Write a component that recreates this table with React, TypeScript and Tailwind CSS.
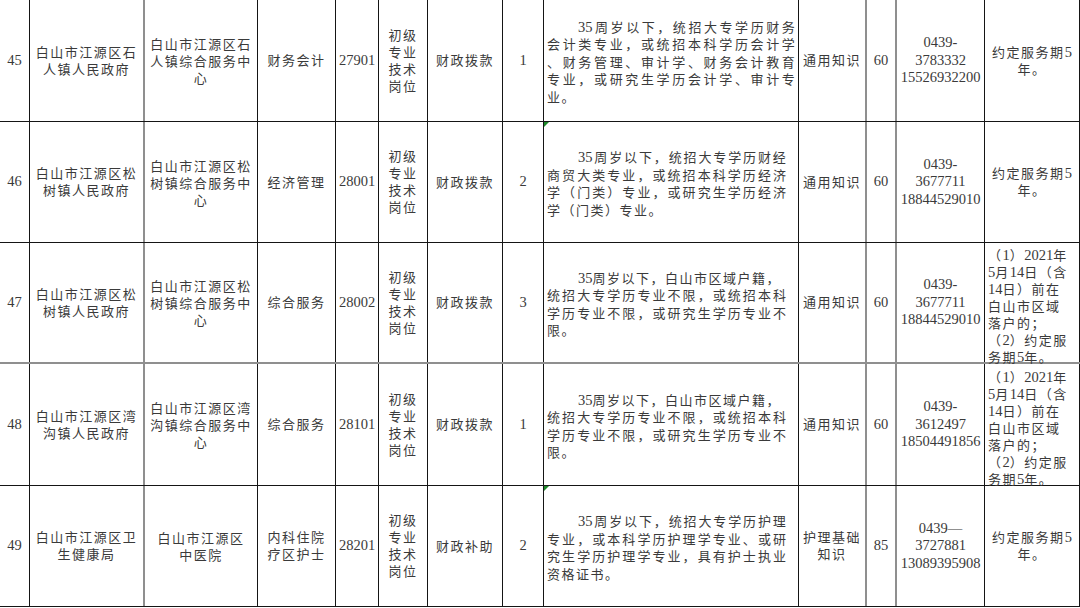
import React from "react";

type Row = {
  n: string;
  dept: string[];
  unit: string[];
  post: string[];
  code: string;
  fund: string;
  num: string;
  cond: string[];
  firstJustify: boolean;
  condPr: string;
  exam: string[];
  ratio: string;
  phone: string[];
  note: string[];
  noteLeft: boolean;
  mark: boolean;
  h: string;
  bb: string;
};

const noteLong = ["（1）2021年", "5月14日（含", "14日）前在", "白山市区域", "落户的；", "（2）约定服", "务期5年。"];
const condRural = ["35周岁以下，白山市区域户籍，", "统招大专学历专业不限，或统招本科", "学历专业不限，或研究生学历专业不", "限。"];

const rows: Row[] = [
  {
    n: "45",
    dept: ["白山市江源区石", "人镇人民政府"],
    unit: ["白山市江源区石", "人镇综合服务中", "心"],
    post: ["财务会计"],
    code: "27901",
    fund: "财政拨款",
    num: "1",
    cond: ["35周岁以下，统招大专学历财务", "会计类专业，或统招本科学历会计学", "、财务管理、审计学、财务会计教育", "专业，或研究生学历会计学、审计专", "业。"],
    firstJustify: true,
    condPr: "pr-[3px]",
    exam: ["通用知识"],
    ratio: "60",
    phone: ["0439-", "3783332", "15526932200"],
    note: ["约定服务期5", "年。"],
    noteLeft: false,
    mark: false,
    h: "h-[122px]",
    bb: "border-b border-b-[#151515]",
  },
  {
    n: "46",
    dept: ["白山市江源区松", "树镇人民政府"],
    unit: ["白山市江源区松", "树镇综合服务中", "心"],
    post: ["经济管理"],
    code: "28001",
    fund: "财政拨款",
    num: "2",
    cond: ["35周岁以下，统招大专学历财经", "商贸大类专业，或统招本科学历经济", "学（门类）专业，或研究生学历经济", "学（门类）专业。"],
    firstJustify: true,
    condPr: "pr-[12px]",
    exam: ["通用知识"],
    ratio: "60",
    phone: ["0439-", "3677711", "18844529010"],
    note: ["约定服务期5", "年。"],
    noteLeft: false,
    mark: true,
    h: "h-[121px]",
    bb: "border-b border-b-[#151515]",
  },
  {
    n: "47",
    dept: ["白山市江源区松", "树镇人民政府"],
    unit: ["白山市江源区松", "树镇综合服务中", "心"],
    post: ["综合服务"],
    code: "28002",
    fund: "财政拨款",
    num: "3",
    cond: condRural,
    firstJustify: false,
    condPr: "pr-[12px]",
    exam: ["通用知识"],
    ratio: "60",
    phone: ["0439-", "3677711", "18844529010"],
    note: noteLong,
    noteLeft: true,
    mark: false,
    h: "h-[121px]",
    bb: "border-b-2 border-b-[#8f8f8f]",
  },
  {
    n: "48",
    dept: ["白山市江源区湾", "沟镇人民政府"],
    unit: ["白山市江源区湾", "沟镇综合服务中", "心"],
    post: ["综合服务"],
    code: "28101",
    fund: "财政拨款",
    num: "1",
    cond: condRural,
    firstJustify: false,
    condPr: "pr-[12px]",
    exam: ["通用知识"],
    ratio: "60",
    phone: ["0439-", "3612497", "18504491856"],
    note: noteLong,
    noteLeft: true,
    mark: false,
    h: "h-[122px]",
    bb: "border-b border-b-[#151515]",
  },
  {
    n: "49",
    dept: ["白山市江源区卫", "生健康局"],
    unit: ["白山市江源区", "中医院"],
    post: ["内科住院", "疗区护士"],
    code: "28201",
    fund: "财政补助",
    num: "2",
    cond: ["35周岁以下，统招大专学历护理", "专业，或本科学历护理学专业、或研", "究生学历护理学专业，具有护士执业", "资格证书。"],
    firstJustify: true,
    condPr: "pr-[12px]",
    exam: ["护理基础", "知识"],
    ratio: "85",
    phone: ["0439—", "3727881", "13089395908"],
    note: ["约定服务期5", "年。"],
    noteLeft: false,
    mark: true,
    h: "h-[121px]",
    bb: "border-b border-b-[#151515]",
  },
];

// Render text with digit runs in a larger serif size
function T({ s }: { s: string }) {
  const parts = s.match(/\d+|[^\d]+/g) || [];
  return (
    <>
      {parts.map((p, i) =>
        /^\d+$/.test(p) ? (
          <span key={i} className="text-[14.5px] tracking-normal">
            {p}
          </span>
        ) : (
          <span key={i}>{p}</span>
        )
      )}
    </>
  );
}

function Lines({ lines, left }: { lines: string[]; left?: boolean }) {
  return (
    <div className={left ? "text-left" : "text-center"}>
      {lines.map((l, i) => (
        <div key={i} className="whitespace-nowrap leading-[17px]">
          <T s={l} />
        </div>
      ))}
    </div>
  );
}

function Justified({ s, indent }: { s: string; indent?: boolean }) {
  const tokens = s.match(/\d+|./gu) || [];
  return (
    <div className={`flex justify-between leading-[17.5px] tracking-normal ${indent ? "pl-[31px]" : ""}`}>
      {tokens.map((t, i) =>
        /^\d+$/.test(t) ? (
          <span key={i} className="text-[14.5px]">
            {t}
          </span>
        ) : (
          <span key={i}>{t}</span>
        )
      )}
    </div>
  );
}

const black = "border-r border-r-[#151515]";
const gray = "border-r-2 border-r-[#8f8f8f]";
const cellBase = "flex items-center justify-center shrink-0 h-full";

export default function App() {
  return (
    <div className="w-[1080px] h-[608px] overflow-hidden bg-white text-[#3a3a3a] text-[13px] tracking-[1.5px] font-['Liberation_Serif','Noto_Sans_CJK_SC',serif]">
      {rows.map((r) => (
        <div key={r.n} className={`flex w-[1080px] ${r.h} ${r.bb}`}>
          <div className={`${cellBase} w-[30px] ${black}`}>
            <span className="text-[14.5px] tracking-normal">{r.n}</span>
          </div>
          <div className={`${cellBase} w-[115px] ${gray}`}>
            <Lines lines={r.dept} />
          </div>
          <div className={`${cellBase} w-[113px] ${black} pt-[2px]`}>
            <Lines lines={r.unit} />
          </div>
          <div className={`${cellBase} w-[78px] ${black}`}>
            <Lines lines={r.post} />
          </div>
          <div className={`${cellBase} w-[43px] ${black}`}>
            <span className="text-[14.5px] tracking-normal">{r.code}</span>
          </div>
          <div className={`${cellBase} w-[49px] ${black}`}>
            <Lines lines={["初级", "专业", "技术", "岗位"]} />
          </div>
          <div className={`${cellBase} w-[75px] ${black}`}>
            <Lines lines={[r.fund]} />
          </div>
          <div className={`${cellBase} w-[41px] ${black}`}>
            <span className="text-[14.5px] tracking-normal">{r.num}</span>
          </div>
          <div className={`relative flex flex-col justify-center shrink-0 h-full w-[255px] pl-[3px] pt-[4px] ${r.condPr} ${black}`}>
            {r.mark && (
              <div className="absolute left-0 top-0 w-0 h-0 border-t-[5px] border-t-[#1e8a2a] border-r-[5px] border-r-transparent" />
            )}
            {r.cond.map((l, i) => {
              const last = i === r.cond.length - 1;
              const first = i === 0;
              if (last || (first && !r.firstJustify)) {
                return (
                  <div key={i} className={`whitespace-nowrap leading-[17.5px] ${first ? "pl-[31px]" : ""}`}>
                    <T s={l} />
                  </div>
                );
              }
              return <Justified key={i} s={l} indent={first} />;
            })}
          </div>
          <div className={`${cellBase} w-[68px] ${gray}`}>
            <Lines lines={r.exam} />
          </div>
          <div className={`${cellBase} w-[30px] ${gray}`}>
            <span className="text-[14.5px] tracking-normal">{r.ratio}</span>
          </div>
          <div className={`${cellBase} w-[88px] ${black}`}>
            <div className="text-center text-[14.5px] tracking-normal leading-[17.5px]">
              {r.phone.map((p, i) => (
                <div key={i}>{p}</div>
              ))}
            </div>
          </div>
          <div className={`${cellBase} w-[95px] border-r border-r-[#151515] ${r.noteLeft ? "justify-start pl-[3px] pt-[8px]" : ""}`}>
            <Lines lines={r.note} left={r.noteLeft} />
          </div>
        </div>
      ))}
    </div>
  );
}
